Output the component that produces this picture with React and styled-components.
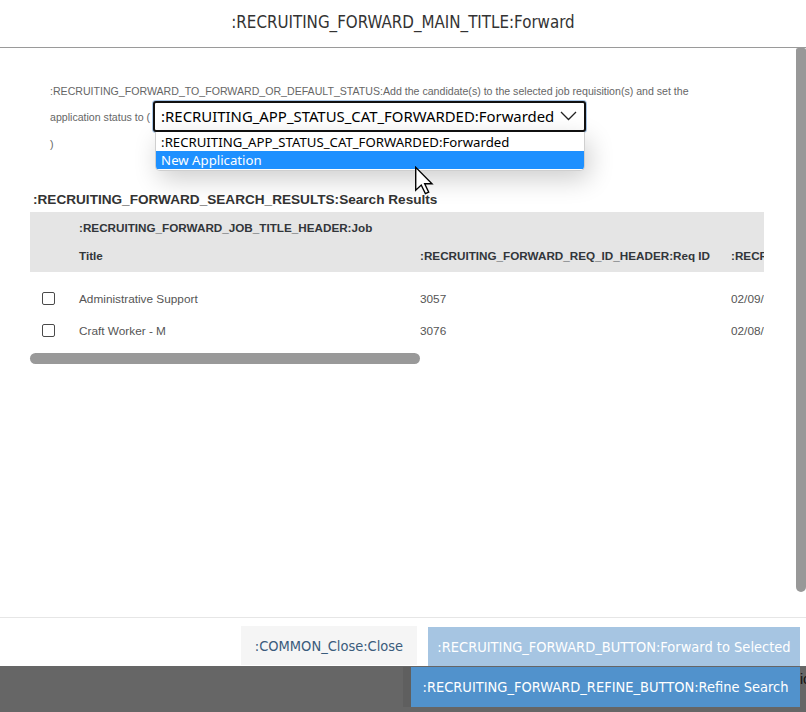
import React from "react";
import styled, { createGlobalStyle } from "styled-components";

const GlobalStyle = createGlobalStyle`
  html, body { margin: 0; padding: 0; background: #ffffff; }
  body { font-family: "Liberation Sans", Arial, sans-serif; overflow: hidden; }
  * { box-sizing: border-box; }
`;

const NARROW = `"Liberation Sans Narrow", "Arial Narrow", "DejaVu Sans Condensed", sans-serif`;

const Page = styled.div`
  width: 806px;
  height: 712px;
  display: flex;
  flex-direction: column;
  background: #ffffff;
  overflow: hidden;
`;

const Modal = styled.div`
  flex: 1;
  display: flex;
  flex-direction: column;
  min-height: 0;
`;

const Header = styled.header`
  height: 48px;
  flex: none;
  display: flex;
  align-items: center;
  justify-content: center;
  border-bottom: 1px solid #9a9a9a;
  border-radius: 6px 6px 0 0;
`;

const Title = styled.h1`
  margin: 0;
  font-family: ${NARROW};
  font-weight: normal;
  font-size: 16.8px;
  color: #333333;
  padding-bottom: 3px;
`;

const BodyRow = styled.div`
  flex: 1;
  display: flex;
  min-height: 0;
`;

const Content = styled.div`
  flex: 1;
  padding: 30px 0 0 30px;
  min-width: 0;
`;

const VScroll = styled.div`
  width: 10px;
  flex: none;
  padding-bottom: 25px;
  display: flex;
`;

const VThumb = styled.div`
  flex: 1;
  background: #989898;
  border-radius: 2px 2px 5px 5px;
`;

const Instructions = styled.p`
  margin: 0 0 0 20px;
  font-size: 10.6px;
  line-height: 26px;
  color: #666666;
`;

const SelectWrap = styled.span`
  position: relative;
  display: inline-block;
  vertical-align: middle;
  margin: -5px 0 -1px 3px;
`;

const Select = styled.span`
  display: flex;
  align-items: center;
  justify-content: space-between;
  width: 433px;
  height: 31px;
  padding: 0 7px 0 6px;
  border: 2px solid #111111;
  border-radius: 3px;
  box-shadow: 0 0 0 1px #a9c6e6;
  background: #ffffff;
  font-family: "Noto Sans", "Open Sans", sans-serif;
  font-size: 14.9px;
  color: #000000;
  line-height: 1;
  white-space: nowrap;
`;

const Chevron = styled.svg`
  width: 17px;
  height: 10px;
  flex: none;
`;

const Dropdown = styled.ul`
  position: absolute;
  left: 2px;
  top: 31px;
  width: 430px;
  margin: 0;
  padding: 1px 0 1px;
  list-style: none;
  background: #ffffff;
  border: 1px solid #cfcfcf;
  border-top: none;
  border-radius: 0 0 5px 5px;
  box-shadow: 4px 8px 26px rgba(0, 0, 0, 0.2);
  overflow: hidden;
  z-index: 5;
`;

const Option = styled.li`
  height: 18px;
  padding: 0 5px;
  font-family: "Noto Sans", "Open Sans", sans-serif;
  font-size: 13.2px;
  line-height: 18px;
  white-space: nowrap;
  color: ${(p) => (p.$active ? "#ffffff" : "#000000")};
  background: ${(p) => (p.$active ? "#1e90ff" : "transparent")};
`;

const Cursor = styled.svg`
  position: absolute;
  left: 261px;
  top: 65px;
  width: 20px;
  height: 29px;
  z-index: 6;
`;

const SectionTitle = styled.h2`
  margin: 35px 0 4px 3px;
  font-size: 13.6px;
  line-height: 16px;
  font-weight: bold;
  color: #333333;
`;

const TableViewport = styled.div`
  width: 734px;
  overflow: hidden;
`;

const TableGrid = styled.div`
  width: 900px;
`;

const HeadBlock = styled.div`
  background: #e5e5e5;
  height: 60px;
`;

const Row = styled.div`
  display: grid;
  grid-template-columns: 49px 341px 311px 200px;
  align-items: center;
  height: ${(p) => p.$h || 32}px;
`;

const HeadCell = styled.div`
  font-size: 11.7px;
  font-weight: bold;
  color: #32363a;
  white-space: nowrap;
`;

const RowsBlock = styled.div`
  padding-top: 11px;
`;

const Cell = styled.div`
  font-size: 11.8px;
  color: #555555;
  white-space: nowrap;
`;

const CheckCell = styled.div`
  display: flex;
  padding-left: 12px;
`;

const Checkbox = styled.span`
  width: 13px;
  height: 13px;
  border: 1px solid #4a4a4a;
  border-radius: 2px;
  background: #ffffff;
`;

const HScroll = styled.div`
  margin-top: 6px;
  width: 390px;
  height: 11px;
  border-radius: 6px;
  background: #999999;
`;

const Footer = styled.footer`
  height: 49px;
  flex: none;
  border-top: 1px solid #e6e6e6;
  display: flex;
  justify-content: flex-end;
  align-items: flex-end;
  gap: 11px;
  padding-right: 6px;
`;

const Button = styled.button`
  border: none;
  border-radius: 0;
  margin: 0;
  padding: 0;
  height: 39px;
  width: ${(p) => p.$w}px;
  font-family: ${NARROW};
  font-size: 14.5px;
  white-space: nowrap;
  display: flex;
  align-items: center;
  justify-content: center;
  cursor: pointer;
`;

const CloseButton = styled(Button)`
  background: #f5f5f5;
  color: #3b5c7c;
  margin-bottom: 1px;
`;

const ForwardButton = styled(Button)`
  background: #a6c5e2;
  color: #ffffff;
`;

const Band = styled.div`
  height: 46px;
  flex: none;
  background: #666666;
  display: flex;
  justify-content: flex-end;
  align-items: flex-start;
  padding-top: 1px;
`;

const RefineButton = styled(Button)`
  height: 40px;
  background: #5192cc;
  color: #ffffff;
  box-shadow: -8px 0 0 #5f5f5f;
`;

const Trailing = styled.span`
  width: 6px;
  overflow: hidden;
  white-space: nowrap;
  font-size: 14px;
  line-height: 14px;
  margin-top: 5px;
  color: #111111;
`;

const rows = [
  { title: "Administrative Support", id: "3057", date: "02/09/2023" },
  { title: "Craft Worker - M", id: "3076", date: "02/08/2023" },
];

export default function App() {
  return (
    <Page>
      <GlobalStyle />
      <Modal>
        <Header>
          <Title>:RECRUITING_FORWARD_MAIN_TITLE:Forward</Title>
        </Header>
        <BodyRow>
          <Content>
            <Instructions>
              :RECRUITING_FORWARD_TO_FORWARD_OR_DEFAULT_STATUS:Add the candidate(s) to the selected job requisition(s) and set the
              <br />
              application status to (
              <SelectWrap>
                <Select>
                  <span>:RECRUITING_APP_STATUS_CAT_FORWARDED:Forwarded</span>
                  <Chevron viewBox="0 0 17 10">
                    <polyline points="1,1 8.5,8.5 16,1" fill="none" stroke="#222" strokeWidth="1.3" />
                  </Chevron>
                </Select>
                <Dropdown>
                  <Option>:RECRUITING_APP_STATUS_CAT_FORWARDED:Forwarded</Option>
                  <Option $active>New Application</Option>
                </Dropdown>
                <Cursor viewBox="0 0 14 21">
                  <path
                    d="M1 1 L1 17.5 L5 13.8 L8 20 L10.4 19 L7.5 12.9 L12.8 12.9 Z"
                    fill="#ffffff"
                    stroke="#000000"
                    strokeWidth="1"
                    strokeLinejoin="miter"
                  />
                </Cursor>
              </SelectWrap>
              <br />)
            </Instructions>
            <SectionTitle>:RECRUITING_FORWARD_SEARCH_RESULTS:Search Results</SectionTitle>
            <TableViewport>
              <TableGrid>
                <HeadBlock>
                  <Row $h={31}>
                    <span />
                    <HeadCell>:RECRUITING_FORWARD_JOB_TITLE_HEADER:Job</HeadCell>
                  </Row>
                  <Row $h={26}>
                    <span />
                    <HeadCell>Title</HeadCell>
                    <HeadCell>:RECRUITING_FORWARD_REQ_ID_HEADER:Req ID</HeadCell>
                    <HeadCell>:RECRUITING_FORWARD_DATE_HEADER:Date</HeadCell>
                  </Row>
                </HeadBlock>
                <RowsBlock>
                  {rows.map((r) => (
                    <Row key={r.id}>
                      <CheckCell>
                        <Checkbox />
                      </CheckCell>
                      <Cell>{r.title}</Cell>
                      <Cell>{r.id}</Cell>
                      <Cell>{r.date}</Cell>
                    </Row>
                  ))}
                </RowsBlock>
              </TableGrid>
            </TableViewport>
            <HScroll />
          </Content>
          <VScroll>
            <VThumb />
          </VScroll>
        </BodyRow>
        <Footer>
          <CloseButton $w={176}>:COMMON_Close:Close</CloseButton>
          <ForwardButton $w={372}>:RECRUITING_FORWARD_BUTTON:Forward to Selected</ForwardButton>
        </Footer>
      </Modal>
      <Band>
        <RefineButton $w={389}>:RECRUITING_FORWARD_REFINE_BUTTON:Refine Search</RefineButton>
        <Trailing>ic</Trailing>
      </Band>
    </Page>
  );
}
